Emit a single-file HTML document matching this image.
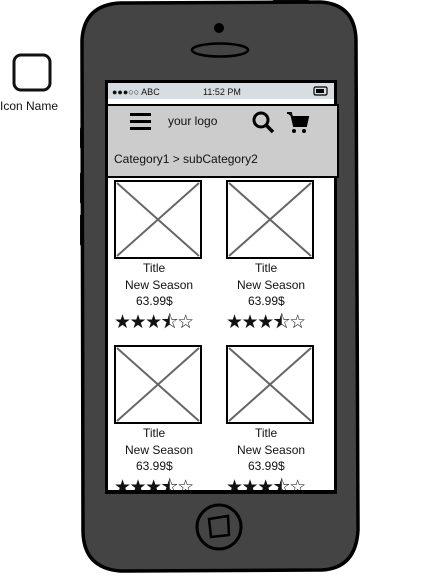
<!DOCTYPE html>
<html><head><meta charset="utf-8"><style>
body{margin:0;width:443px;height:573px;background:#fff;overflow:hidden;font-family:"Liberation Sans",sans-serif}
svg text{font-family:"Liberation Sans",sans-serif;fill:#111}
</style></head><body>
<svg width="443" height="573" viewBox="0 0 443 573">
<rect x="14" y="55" width="36" height="35" rx="7" fill="#fff" stroke="#111" stroke-width="3"/>
<text x="0" y="110" font-size="12">Icon Name</text>
<rect x="80" y="127" width="4" height="22" rx="2" fill="#111"/>
<rect x="80" y="172" width="4" height="32" rx="2" fill="#111"/>
<rect x="80" y="214" width="4" height="32" rx="2" fill="#111"/>
<rect x="272" y="0" width="38" height="5" rx="2" fill="#111"/>
<path d="M120 3 L320 2 Q355 4 356 40 L358 530 Q356 568 322 570 L120 571 Q84 568 83 532 L82 40 Q84 5 120 3 Z" fill="#444" stroke="#000" stroke-width="3.5"/>
<circle cx="219" cy="28" r="5" fill="#000"/>
<ellipse cx="220" cy="50" rx="28" ry="6.5" fill="none" stroke="#000" stroke-width="2.5"/>
<circle cx="219" cy="527" r="22" fill="none" stroke="#000" stroke-width="3"/>
<path d="M209 519 L228 516 L229 535 L211 537 Z" fill="none" stroke="#000" stroke-width="2.5"/>
<rect x="105" y="80" width="232" height="413" fill="#000"/>
<rect x="108" y="83" width="226" height="407" fill="#fff"/>
<rect x="108" y="83" width="226" height="16" fill="#d7dde1"/>
<text x="112" y="95" font-size="9">●●●○○ ABC</text>
<text x="203" y="95" font-size="9">11:52 PM</text>
<rect x="314" y="87" width="13" height="8" rx="1.5" fill="none" stroke="#000" stroke-width="1.2"/>
<rect x="316" y="89" width="8" height="4" fill="#000"/>
<rect x="107" y="105" width="231" height="72" fill="#ccc" stroke="#000" stroke-width="2"/>
<rect x="130" y="113" width="21" height="3" fill="#000"/>
<rect x="130" y="120" width="21" height="3" fill="#000"/>
<rect x="130" y="127" width="21" height="3" fill="#000"/>
<text x="168" y="125" font-size="12">your logo</text>
<circle cx="261" cy="120" r="7" fill="none" stroke="#000" stroke-width="3"/>
<path d="M266 125 L273 132" stroke="#000" stroke-width="3.5"/>
<path d="M287 113 L291 113 L294 126 L306 126 L308 117 L292 117" fill="#000" stroke="#000" stroke-width="2"/>
<circle cx="294" cy="131" r="2" fill="#000"/><circle cx="304" cy="131" r="2" fill="#000"/>
<text x="114" y="163" font-size="12">Category1 &gt; subCategory2</text>
<g id="p">
<rect x="115" y="181" width="86" height="77" fill="#fff" stroke="#000" stroke-width="2"/>
<path d="M117 183 L199 256 M199 183 L117 256" stroke="#666" stroke-width="2"/>
<text x="143" y="272" font-size="12">Title</text>
<text x="125" y="289" font-size="12">New Season</text>
<text x="136" y="305" font-size="12">63.99$</text>
<text x="114" y="328" font-size="19" letter-spacing="-1.5" font-family="DejaVu Sans" style="font-family:'DejaVu Sans'">★★★⯪☆</text>
</g>
<use href="#p" x="112"/>
<use href="#p" y="165"/>
<use href="#p" x="112" y="165"/>
<path d="M105 490 L337 490 L337 494 L105 494 Z" fill="#000"/>
</svg>
</body></html>
